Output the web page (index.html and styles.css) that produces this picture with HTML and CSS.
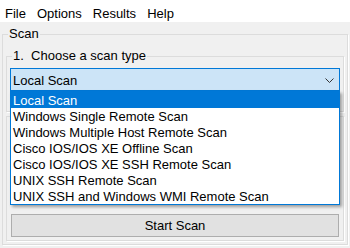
FILE: index.html
```html
<!DOCTYPE html>
<html lang="en">
<head>
  <meta charset="UTF-8" />
  <title>Scan</title>
  <link rel="stylesheet" href="styles.css">
</head>
<body>

<div id="menubar">
  <span class="menu-item">File</span>
  <span class="menu-item">Options</span>
  <span class="menu-item">Results</span>
  <span class="menu-item">Help</span>
</div>

<div id="window-body">
  <fieldset class="group outer-group">
    <legend>Scan</legend>

    <fieldset class="group">
      <legend>1.&nbsp; Choose a scan type</legend>
      <div class="combo">
        <div class="combo-box">
          <span>Local Scan</span>
          <svg class="chevron" width="9" height="5" viewBox="0 0 9 5">
            <path d="M0.5 0.5 L4.5 4.5 L8.5 0.5" fill="none" stroke="#333" stroke-width="1"/>
          </svg>
        </div>
        <ul class="combo-list">
          <li class="selected">Local Scan</li>
          <li>Windows Single Remote Scan</li>
          <li>Windows Multiple Host Remote Scan</li>
          <li>Cisco IOS/IOS XE Offline Scan</li>
          <li>Cisco IOS/IOS XE SSH Remote Scan</li>
          <li>UNIX SSH Remote Scan</li>
          <li>UNIX SSH and Windows WMI Remote Scan</li>
        </ul>
      </div>
    </fieldset>

    <fieldset class="group run-group">
      <div class="options-area"></div>
      <button class="start-btn">Start Scan</button>
    </fieldset>
  </fieldset>
</div>

</body>
</html>
```

FILE: styles.css
```css
body {
  margin: 0;
  font-family: 'Liberation Sans', Arial, sans-serif;
  font-size: 13px;
  color: #000;
  background: #f0f0f0;
  width: 350px;
  height: 248px;
  overflow: hidden;
}

#menubar {
  display: flex;
  gap: 11px;
  height: 17px;
  padding: 5px 0 0 5px;
  line-height: 18px;
  background: #fff;
}

#window-body {
  padding: 5px 2px 0;
}

.group {
  margin: 0;
  padding: 0 3px 3px;
  border: 1px solid #dcdcdc;
  box-shadow: 1px 1px 0 #fff;
  min-width: 0;
}

.group legend {
  margin-left: 2px;
  padding: 0 1px;
  line-height: 14px;
}

.outer-group > .group {
  margin-top: 8px;
}

.combo {
  position: relative;
  margin: 5px 0 17px;
}

.combo-box {
  display: flex;
  align-items: center;
  justify-content: space-between;
  height: 20px;
  padding: 1px 4px 0 2px;
  border: 1px solid #0078d7;
  background: #cce4f7;
}

.chevron {
  margin-right: 1px;
}

.combo-list {
  position: absolute;
  top: 100%;
  left: 0;
  right: 0;
  margin: 0;
  padding: 0;
  list-style: none;
  background: #fff;
  border: 1px solid #0078d7;
  box-shadow: 2px 2px 3px rgba(0, 0, 0, 0.35);
  z-index: 2;
}

.combo-list li {
  height: 15px;
  padding: 1px 0 0 2px;
  line-height: 15px;
  white-space: nowrap;
}

.combo-list .selected {
  background: #0078d7;
  color: #fff;
}

.run-group.group {
  margin-top: 4px;
}

.options-area {
  height: 97px;
}

.start-btn {
  display: block;
  width: calc(100% - 2px);
  height: 23px;
  margin: 0 1px;
  padding: 0;
  font-family: inherit;
  font-size: 13px;
  color: #000;
  background: #e1e1e1;
  border: 1px solid #adadad;
}
```
